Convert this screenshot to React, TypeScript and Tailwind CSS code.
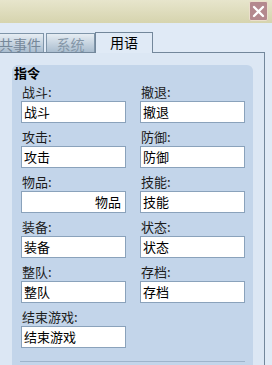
import React from "react";

const rows: [string, string][] = [
  ["战斗", "撤退"],
  ["攻击", "防御"],
  ["物品", "技能"],
  ["装备", "状态"],
  ["整队", "存档"],
  ["结束游戏", ""],
];

function Field({ label, right }: { label: string; right?: boolean }) {
  return (
    <div className="flex flex-col">
      <div className="h-[18px] leading-[18px] text-[13px] text-[#1c1c1c] pl-[1px]">{label}:</div>
      <div
        className={
          "h-[22px] bg-white border border-[#8aa2bb] text-[13px] leading-[20px] text-black " +
          (right ? "text-right pr-[4px]" : "pl-[2px]")
        }
      >
        {label}
      </div>
    </div>
  );
}

export default function App() {
  return (
    <div className="w-[272px] h-[365px] overflow-hidden bg-[#e0eaf6] font-['Noto_Sans_CJK_SC','Noto_Sans',sans-serif]">
      {/* title bar */}
      <div className="h-[23px] bg-gradient-to-b from-[#e7e5cc] to-[#d6d4ae] flex justify-end items-start pt-[1px] pr-[4px]">
        <div className="w-[19px] h-[20px] bg-[#b4898e] border border-[#ebdfcc] rounded-[2px] flex items-center justify-center">
          <svg width="13" height="13" viewBox="0 0 13 13">
            <path d="M2 2 L11 11 M11 2 L2 11" stroke="white" strokeWidth="2.4" strokeLinecap="round" />
          </svg>
        </div>
      </div>

      {/* tab row */}
      <div className="h-[29px] flex items-end relative z-10">
        <div className="ml-[-18px] w-[62px] h-[19px] border border-b-0 border-[#7f95a9] bg-gradient-to-b from-[#e6edf3] to-[#aabdcf] flex justify-center pt-[3px] text-[14px] leading-[14px] text-[#76889a] whitespace-nowrap">
          公共事件
        </div>
        <div className="ml-[2px] w-[49px] h-[19px] border border-b-0 border-[#7f95a9] bg-gradient-to-b from-[#e6edf3] to-[#aabdcf] flex justify-center pt-[3px] text-[14px] leading-[14px] text-[#8597a8]">
          系统
        </div>
        <div className="w-[58px] h-[21px] mb-[-1px] border border-b-0 border-[#73879b] bg-[#e0eaf6] flex justify-center pt-[2px] text-[14px] leading-[14px] text-black">
          用语
        </div>
      </div>

      {/* panel */}
      <div className="w-[265px] h-[400px] border-t border-r border-[#73879b] bg-[#dce7f4] pt-[12px] pl-[12px] pr-[11px]">
        <div className="rounded-t-[6px] bg-[#c3d5ea] pt-[1px] pb-[20px]">
          <div className="pl-[2px] h-[14px] leading-[14px] text-[13px] font-bold text-black">指令</div>
          <div className="mt-[3px] pl-[9px] grid grid-cols-[105px_105px] gap-x-[14px] gap-y-[5px]">
            {rows.map(([a, b]) => (
              <React.Fragment key={a}>
                <Field label={a} right={a === "物品"} />
                {b ? <Field label={b} /> : <div />}
              </React.Fragment>
            ))}
          </div>
          <div className="mt-[13px] ml-[8px] mr-[8px] h-[1px] bg-[#9fb4cb]" />
        </div>
      </div>
    </div>
  );
}
